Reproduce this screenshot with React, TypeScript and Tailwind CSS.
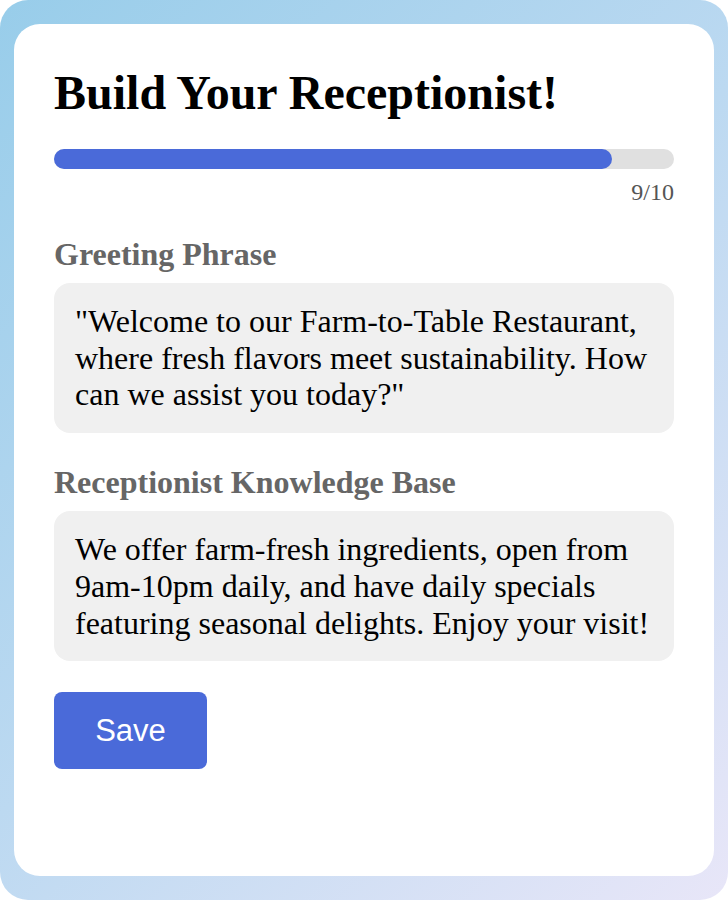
export default function App() {
  const step = 9;
  const total = 10;
  return (
    <div className="w-[728px] h-[900px] rounded-[28px] bg-[linear-gradient(135deg,#98cdea_0%,#bcd9f1_50%,#e8e6f8_100%)] px-[14px] py-[24px] font-['Liberation_Serif',serif]">
      <div className="h-full rounded-[26px] bg-white px-[40px] pt-[42px]">
        <h1 className="text-[48px] font-bold leading-[54px] text-black">Build Your Receptionist!</h1>

        <div className="mt-[29px] h-[20px] w-full rounded-full bg-[#e0e0e0]">
          <div
            className="h-full rounded-full bg-[#4a6ad9]"
            style={{ width: `${(step / total) * 100}%` }}
          />
        </div>
        <div className="mt-[9px] text-right text-[24px] leading-[28px] text-[#555]">
          {step}/{total}
        </div>

        <div className="mt-[30px] text-[32px] font-bold leading-[37px] text-[#666]">Greeting Phrase</div>
        <div className="mt-[10px] rounded-[16px] bg-[#f0f0f0] px-[21px] py-[20px] text-[32px] leading-[36.7px] text-black">
          "Welcome to our Farm-to-Table Restaurant, where fresh flavors meet sustainability. How can we assist you today?"
        </div>

        <div className="mt-[31px] text-[32px] font-bold leading-[37px] text-[#666]">Receptionist Knowledge Base</div>
        <div className="mt-[10px] rounded-[16px] bg-[#f0f0f0] px-[21px] py-[20px] text-[32px] leading-[36.7px] text-black">
          We offer farm-fresh ingredients, open from 9am-10pm daily, and have daily specials featuring seasonal delights. Enjoy your visit!
        </div>

        <button className="mt-[31px] h-[77px] w-[153px] rounded-[8px] bg-[#4a6ad9] pt-[2px] font-['Liberation_Sans',Arial,sans-serif] text-[31px] text-white">
          Save
        </button>
      </div>
    </div>
  );
}
